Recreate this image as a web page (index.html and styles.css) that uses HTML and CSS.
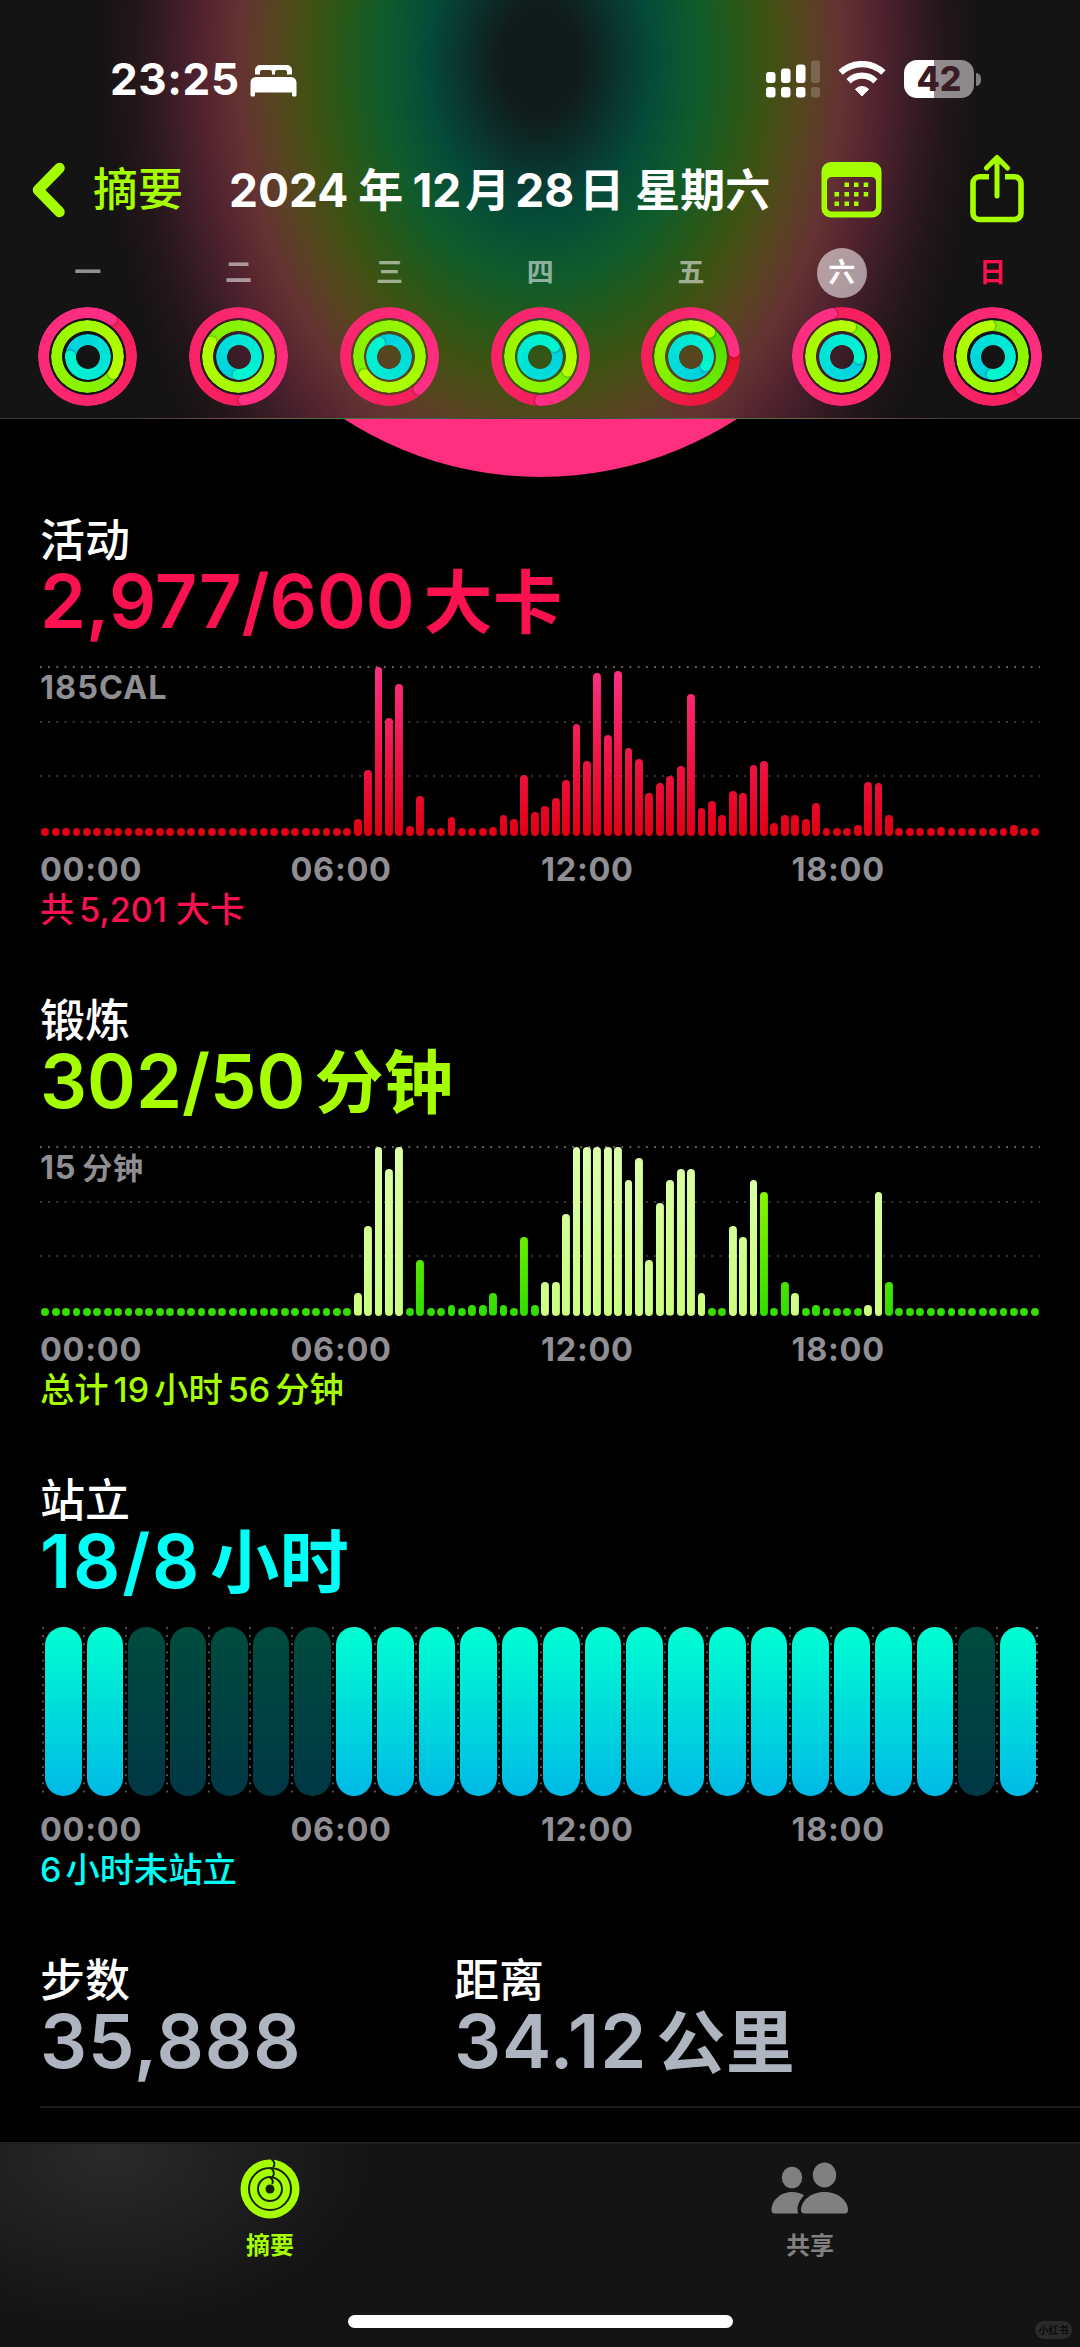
FILE: index.html
```html
<!DOCTYPE html>
<html lang="zh-CN">
<head>
    <meta charset="UTF-8">
    <meta name="viewport" content="width=device-width, initial-scale=1.0">
    <title>健身记录 - 摘要</title>
    <link rel="stylesheet" href="styles.css">
</head>
<body>

<header>
    <div class="status-bar">
        <span class="clock">23:25</span>
        <svg class="bed" width="47" height="33" viewBox="0 0 47 33" fill="#fff">
            <path d="M5 10V6a5 5 0 0 1 5-5h27a5 5 0 0 1 5 5v4.500h-5V8a2 2 0 0 0-2-2h-8a2 2 0 0 0-2 2v2.500h-3V8a2 2 0 0 0-2-2h-8a2 2 0 0 0-2 2v2.500H5z"/>
            <path d="M6 13h35a5.500 5.500 0 0 1 5.500 5.500V31a1.500 1.500 0 0 1-1.500 1.500h-1.500A1.500 1.500 0 0 1 42 31v-2.500H5V31a1.500 1.500 0 0 1-1.500 1.500H2A1.500 1.500 0 0 1 .5 31V18.500A5.500 5.500 0 0 1 6 13z"/>
        </svg>
        <div class="status-icons">
            <svg width="54" height="38" viewBox="0 0 54 38" fill="#fff">
                <rect x="0" y="12" width="9.500" height="11" rx="3"/>
                <rect x="15" y="8.500" width="9.500" height="14.500" rx="3"/>
                <rect x="30" y="4.500" width="9.500" height="18.500" rx="3"/>
                <rect x="0" y="27" width="9.500" height="10.500" rx="3"/>
                <rect x="15" y="27" width="9.500" height="10.500" rx="3"/>
                <rect x="30" y="27" width="9.500" height="10.500" rx="3"/>
                <g opacity=".2">
                    <rect x="45" y=".5" width="9" height="22.500" rx="3"/>
                    <rect x="45" y="27" width="9" height="10.500" rx="3"/>
                </g>
            </svg>
            <svg class="wifi" width="48" height="36" viewBox="0 0 48 36" fill="none" stroke="#fff" stroke-width="6.200">
                <path d="M2.600 11.600a31 31 0 0 1 42.800 0"/>
                <path d="M10.600 20.200a19 19 0 0 1 26.800 0"/>
                <path d="M24 35l-6.600-6.800a9.500 9.500 0 0 1 13.200 0z" fill="#fff" stroke="#fff" stroke-width="1"/>
            </svg>
            <div class="battery"><span>42</span></div>
            <div class="battery-cap"></div>
        </div>
    </div>

    <div class="nav-bar">
        <a class="back" href="#">
            <svg width="34" height="56" viewBox="0 0 34 56" fill="none" stroke="#a6ff00" stroke-width="10.500" stroke-linecap="round" stroke-linejoin="round">
                <path d="M27.500 6L6 28l21.500 22"/>
            </svg>
            <span>摘要</span>
        </a>
        <h1><span>2024</span><span class="zh year">年</span><span>12</span><span class="zh month">月</span><span>28</span><span class="zh date">日</span><span class="zh">星期六</span></h1>
        <svg class="calendar" width="61" height="56" viewBox="0 0 61 56" fill="#a6ff00">
            <path fill-rule="evenodd" d="M10 0h41a9.500 9.500 0 0 1 9.500 9.500v37A9 9 0 0 1 51.500 55.500H9.500A9 9 0 0 1 .5 46.500v-37A9.500 9.500 0 0 1 10 0zM10.500 15A4.500 4.500 0 0 0 6 19.500v25.500A4.500 4.500 0 0 0 10.500 49.500h40A4.500 4.500 0 0 0 55 45V19.500A4.500 4.500 0 0 0 50.500 15z"/>
            <path d="M23.500 20.500h4.500v4.500h-4.500zM33 20.500h4.500v4.500H33zM42.700 20.500h4.500v4.500h-4.500zM13.500 30h4.500v4.500h-4.500zM23.500 30h4.500v4.500h-4.500zM33 30h4.500v4.500H33zM42.700 30h4.500v4.500h-4.500zM13.500 39.500h4.500v4.500h-4.500zM23.500 39.500h4.500v4.500h-4.500zM33 39.500h4.500v4.500H33z"/>
        </svg>
        <svg class="share" width="54" height="69" viewBox="0 0 54 69" fill="none" stroke="#a6ff00" stroke-width="5.600">
            <path d="M19 22.800H9.500a6.500 6.500 0 0 0-6.500 6.500V59A6.500 6.500 0 0 0 9.500 65.500h35a6.500 6.500 0 0 0 6.500-6.500V29.300a6.500 6.500 0 0 0-6.500-6.500H35"/>
            <path d="M27 4v38M16.500 14L27 3.500 37.500 14" stroke-width="5" stroke-linecap="round" stroke-linejoin="round"/>
        </svg>
    </div>

    <div class="week" id="week"></div>
</header>

<main>
    <div class="hero">
        <svg width="1080" height="91" viewBox="0 0 1080 91"><circle cx="540.500" cy="-303.500" r="361.500" fill="#ff2e7e"/></svg>
    </div>

    <section class="move">
        <h2>活动</h2>
        <p class="value">2,977/600<span class="zh">大卡</span></p>
        <div class="chart" id="moveChart"><span class="scale">185CAL</span></div>
        <div class="axis"><span>00:00</span><span>06:00</span><span>12:00</span><span>18:00</span></div>
        <p class="total">共<span class="num">5,201</span>大卡</p>
    </section>

    <section class="exercise">
        <h2>锻炼</h2>
        <p class="value">302/50<span class="zh">分钟</span></p>
        <div class="chart" id="exerciseChart"><span class="scale">15<span class="zh">分钟</span></span></div>
        <div class="axis"><span>00:00</span><span>06:00</span><span>12:00</span><span>18:00</span></div>
        <p class="total">总计<span class="num">19</span>小时<span class="num">56</span>分钟</p>
    </section>

    <section class="stand">
        <h2>站立</h2>
        <p class="value">18/8<span class="zh">小时</span></p>
        <div class="stand-chart" id="standChart"></div>
        <div class="axis"><span>00:00</span><span>06:00</span><span>12:00</span><span>18:00</span></div>
        <p class="total"><span class="num first">6</span>小时未站立</p>
    </section>

    <div class="stats">
        <div class="stat">
            <h2>步数</h2>
            <p class="value">35,888</p>
        </div>
        <div class="stat">
            <h2>距离</h2>
            <p class="value">34.12<span class="zh">公里</span></p>
        </div>
    </div>
</main>

<footer>
    <div class="tabs">
        <a class="tab active" href="#">
            <svg width="60" height="60" viewBox="0 0 60 60">
                <circle cx="30" cy="30" r="29.500" fill="#a6ff00"/>
                <g fill="none" stroke="#16200a" stroke-width="2">
                    <circle cx="30" cy="30" r="21"/>
                    <circle cx="30" cy="30" r="12"/>
                    <path d="M31.500 0c3.500 2.500 3.500 6 1.500 8.500M31 9.500c3.500 2 3.500 6 1.500 8.500M30 18.500c3 1.500 3.500 4.500 2 6.500"/>
                </g>
                <circle cx="30" cy="30" r="4.500" fill="#16200a"/>
            </svg>
            <span>摘要</span>
        </a>
        <a class="tab" href="#">
            <svg width="78" height="60" viewBox="0 0 78 60" fill="#808080">
                <ellipse cx="21" cy="18.500" rx="10.200" ry="10.800"/>
                <ellipse cx="53.500" cy="16" rx="11.700" ry="12.500"/>
                <path d="M3.500 54.500C1.500 54.500.5 53 .5 51 .5 42 9 33 21 33c5 0 9 1.300 12 3.500-4 4-6.500 9-6.500 14.500 0 1.500.3 2.500.8 3.500z"/>
                <path d="M33.500 54.500c-2.500 0-3.500-1.500-3.500-3.500C30 43 38.500 33 53.500 33S77 43 77 51c0 2-1 3.500-3.500 3.500z"/>
            </svg>
            <span>共享</span>
        </a>
    </div>
    <div class="home-indicator"></div>
    <div class="watermark">小红书</div>
</footer>

<script>
    // 每日圆环终点角度：活动、锻炼、站立
    const days = [
        { name: '一', ends: [33, 123, 273] },
        { name: '二', ends: [173, 298, 181] },
        { name: '三', ends: [138, 234, 325] },
        { name: '四', ends: [180, 118, 53] },
        { name: '五', ends: [84, 38, 120], cls: 'low' },
        { name: '六', ends: [347, 17, 95], cls: 'today' },
        { name: '日', ends: [139, 355, 182], cls: 'sunday' }
    ];
    const kinds = ['ring-move', 'ring-exercise', 'ring-stand'];

    document.getElementById('week').innerHTML = days.map(d => `
        <div class="day ${d.cls || ''}">
            <span class="day-name">${d.name}</span>
            <div class="rings">
                ${d.ends.map((end, i) => `<div class="ring ${kinds[i]}" style="--end: ${end}deg"><i></i></div>`).join('')}
            </div>
        </div>`).join('');

    // 每 15 分钟一条，值为高度
    const move = new Array(96).fill(8);
    [17, 66, 169.5, 118.5, 152, 10, 40].forEach((v, i) => move[30 + i] = v);
    move[39] = 19;
    [9.5, 21.5, 17.5, 61, 24.5, 30.5, 38.5, 56, 112.5, 75.5, 163, 101, 165.5, 88.5, 77.5, 43, 53, 60, 70, 142,
     28, 35, 21.5, 45, 43.5, 71, 75.5, 13.5, 21, 21, 17, 33].forEach((v, i) => move[43 + i] = v);
    [11.5, 54.5, 53, 21.5].forEach((v, i) => move[78 + i] = v);
    move[86] = 9;
    move[93] = 11;

    // 锻炼分钟数，w 表示体能训练时段
    const exercise = new Array(96).fill('0');
    '2w 8w 15w 13w 15w 0 5 0 0 1 0 1 1 2 1 0 7 1 3w 3w 9w 15w 15w 15w 15w 15w 12w 14w 5w 10w 12w 13w 13w 2w 0 0 8w 7w 12w 11 0 3 2w 0 1 0 0 0 0 1w 11w 3'
        .split(' ').forEach((v, i) => exercise[30 + i] = v);

    function addBars(id, html) {
        document.getElementById(id).insertAdjacentHTML('beforeend', html);
    }

    addBars('moveChart', move.map(h => `<div class="bar" style="height: ${h}px"></div>`).join(''));
    addBars('exerciseChart', exercise.map(v => {
        const h = Math.max(8, parseInt(v) * 11.3);
        return `<div class="bar ${v.endsWith('w') ? 'workout' : ''}" style="height: ${h}px"></div>`;
    }).join(''));

    // 未站立的小时
    const idle = [2, 3, 4, 5, 6, 22];
    addBars('standChart', Array.from({ length: 24 }, (_, i) =>
        `<div class="hour"><div class="pill ${idle.includes(i) ? 'idle' : ''}"></div></div>`).join(''));
</script>

</body>
</html>
```
FILE: styles.css
```css
* {
    box-sizing: border-box;
}
body {
    font-family: Inter, "Noto Sans CJK SC", sans-serif;
    background-color: #000;
    color: #fff;
    margin: 0;
    width: 1080px;
    height: 2347px;
    overflow: hidden;
    display: flex;
    flex-direction: column;
}
h1, h2, p {
    margin: 0;
    white-space: nowrap;
}
a {
    text-decoration: none;
    color: inherit;
}
svg {
    display: block;
    flex: none;
}

/* 顶部 */
header {
    height: 419px;
    flex: none;
    border-bottom: 1px solid rgba(255, 255, 255, 0.16);
    background: radial-gradient(ellipse 500px 690px at 540px 60px,
        #101a18 0%, #101c1a 8%, #0a3530 16%, #054b39 22.5%, #105c2c 32%,
        #25591a 39%, #3f5212 46%, #574520 53%, #643332 60%, #542430 67%,
        #3a1c27 74%, #231619 81%, #151313 88%, #141414 100%);
}
.status-bar {
    height: 100px;
    padding: 58px 99px 0 110px;
    display: flex;
    align-items: center;
}
.clock {
    font-size: 44px;
    font-weight: 700;
    line-height: 44px;
    width: 128px;
    letter-spacing: 0.6px;
}
.bed {
    margin: 2px 0 0 12px;
}
.status-icons {
    display: flex;
    align-items: center;
    margin-left: auto;
}
.wifi {
    margin-left: 18px;
}
.battery {
    width: 70px;
    height: 38px;
    margin-left: 18px;
    border-radius: 13px;
    background: linear-gradient(to right, #fff 43%, rgba(255, 255, 255, 0.5) 43%);
    color: #3a1c27;
    font-size: 34px;
    font-weight: 800;
    line-height: 38px;
    text-align: center;
}
.battery-cap {
    width: 5px;
    height: 13px;
    margin-left: 2px;
    border-radius: 0 5px 5px 0;
    background-color: rgba(255, 255, 255, 0.45);
}
.nav-bar {
    display: flex;
    align-items: center;
    height: 84px;
    margin-top: 48px;
    padding-left: 32px;
}
.back {
    display: flex;
    align-items: center;
    width: 197px;
    gap: 27px;
    color: #a6ff00;
    font-size: 45px;
    font-weight: 500;
    line-height: 60px;
}
h1 {
    width: 592px;
    font-size: 46px;
    line-height: 60px;
    font-weight: 700;
}
h1 .zh {
    font-size: 45px;
}
h1 .year {
    margin: 0 9px 0 10px;
}
h1 .month {
    margin: 0 5px 0 4px;
}
h1 .date {
    margin: 0 11px 0 5px;
}
.share {
    margin: -3px 0 0 88px;
}
.week {
    display: grid;
    grid-template-columns: repeat(7, 150.8px);
    padding: 16px 0 0 12.4px;
}
.day {
    display: flex;
    flex-direction: column;
    align-items: center;
    --red: #f61f5c;
    --green: #7ff000;
}
.day.low {
    --red: #e8102c;
    --green: #4cdf00;
}
.day-name {
    width: 50px;
    height: 50px;
    border-radius: 50%;
    font-size: 27px;
    font-weight: 700;
    line-height: 49px;
    text-align: center;
    color: rgba(255, 255, 255, 0.55);
}
.today .day-name {
    background-color: rgba(255, 255, 255, 0.55);
    color: #fff;
}
.sunday .day-name {
    color: #fa114f;
}
.rings {
    display: grid;
    place-items: center;
    margin-top: 9px;
}
.ring {
    grid-area: 1 / 1;
    display: grid;
    width: var(--size);
    height: var(--size);
    border-radius: 50%;
    background: conic-gradient(from var(--end), var(--tail), var(--head));
    -webkit-mask: radial-gradient(closest-side, transparent calc(100% - 11.5px), #000 calc(100% - 10.7px));
    mask: radial-gradient(closest-side, transparent calc(100% - 11.5px), #000 calc(100% - 10.7px));
}
.ring i {
    grid-area: 1 / 1;
    width: 11px;
    height: var(--size);
    justify-self: center;
    transform: rotate(var(--end));
}
.ring i::before {
    content: "";
    display: block;
    width: 11px;
    height: 11px;
    border-radius: 50%;
    background-color: var(--head);
    box-shadow: 1px 0 2px rgba(0, 0, 0, 0.3);
}
.ring-move {
    --size: 99px;
    --tail: var(--red);
    --head: #ff2f86;
}
.ring-exercise {
    --size: 73px;
    --tail: var(--green);
    --head: #b6ff00;
}
.ring-stand {
    --size: 46px;
    --tail: #00cfe0;
    --head: #00f7cf;
}

.hero {
    height: 91px;
}

/* 三个统计区块 */
section {
    height: 480px;
    padding: 0 40px;
}
h2 {
    font-size: 45px;
    font-weight: 500;
    line-height: 61px;
    height: 60px;
}
.value {
    height: 62px;
    font-size: 74px;
    font-weight: 600;
    line-height: 62px;
}
.value .zh {
    font-size: 69px;
    line-height: 0;
    margin-left: 9px;
    letter-spacing: 0.5px;
}
.move .value, .move .total {
    color: #fa114f;
}
.exercise .value, .exercise .total {
    color: #a6ff00;
}
.stand .value, .stand .total {
    color: #00fff6;
}
.stand .value {
    letter-spacing: 1.8px;
}
.chart {
    position: relative;
    display: grid;
    grid-template-columns: repeat(96, 1fr);
    align-items: end;
    justify-items: center;
    height: 170px;
    margin-top: 34px;
    background:
        radial-gradient(circle at 1px 1px, #666 0.8px, transparent 1.2px) 0 0 / 8.2px 3px repeat-x,
        radial-gradient(circle at 1px 1px, #3a3a3a 0.8px, transparent 1.2px) 0 55px / 8.2px 3px repeat-x,
        radial-gradient(circle at 1px 1px, #3a3a3a 0.8px, transparent 1.2px) 0 109px / 8.2px 3px repeat-x;
}
.scale {
    position: absolute;
    left: 0;
    top: 2px;
}
.scale, .axis {
    color: #8e8e93;
    font-size: 32.5px;
    font-weight: 700;
    line-height: 40px;
    letter-spacing: 0.7px;
}
.move .scale {
    letter-spacing: 1px;
}
.scale .zh {
    font-size: 30px;
    line-height: 0;
    margin-left: 6px;
}
.bar {
    width: 7.8px;
    border-radius: 4px;
    background: linear-gradient(to top, #e00012, #ff3086) bottom / 100% 170px;
}
.exercise .bar {
    background-image: linear-gradient(to top, #30dc00, #aaff00);
}
.exercise .workout {
    background-image: linear-gradient(to top, #ccff80, #dcffaa);
}
.axis {
    display: grid;
    grid-template-columns: repeat(4, 250.5px);
    margin-top: 13.5px;
}
.total {
    font-size: 34.3px;
    font-weight: 500;
    line-height: 39px;
}
.total .num {
    margin: 0 5px;
    font-size: 34px;
}
.total .first {
    margin: 0 4px 0 0;
}
.move .num {
    margin: 0 9px 0 5px;
}
.stand-chart {
    display: grid;
    grid-template-columns: repeat(24, 41.5px);
    height: 170px;
    margin: 34px 0 0 1.5px;
}
.hour {
    padding-left: 3.5px;
    background: radial-gradient(circle at 1px 2px, #555 0.8px, transparent 1.2px) 0 0 / 2px 8.2px repeat-y;
}
.hour:last-child {
    background:
        radial-gradient(circle at 1px 2px, #555 0.8px, transparent 1.2px) 0 0 / 2px 8.2px repeat-y,
        radial-gradient(circle at 1px 2px, #777 0.8px, transparent 1.2px) 100% 0 / 2px 8.2px repeat-y;
}
.pill {
    width: 36.5px;
    height: 169px;
    margin-top: 1px;
    border-radius: 18.25px;
    background: linear-gradient(to bottom, #00ffd2, #00b9e6);
}
.pill.idle {
    background: linear-gradient(to bottom, #004c3e, #003745);
}

/* 步数与距离 */
.stats {
    display: grid;
    grid-template-columns: 414px 1fr;
    height: 158px;
    margin-left: 40px;
    border-bottom: 2px solid #1c1c1e;
}
.stats .value {
    color: #aeb4c0;
    letter-spacing: 1px;
}

/* 底部标签栏 */
footer {
    position: relative;
    height: 205px;
    margin-top: auto;
    flex: none;
    border-top: 2px solid #202020;
    background: radial-gradient(ellipse 260px 170px at 110px 10px, #2a2a2a, #141414) #141414;
}
.tabs {
    display: grid;
    grid-template-columns: 1fr 1fr;
    padding-top: 15px;
}
.tab {
    display: flex;
    flex-direction: column;
    align-items: center;
    gap: 12px;
    color: #808080;
    font-size: 24px;
    font-weight: 600;
    line-height: 30px;
}
.tab.active {
    color: #a6ff00;
}
.home-indicator {
    width: 385px;
    height: 13px;
    margin: 54px auto 0;
    border-radius: 7px;
    background-color: #fff;
}
.watermark {
    position: absolute;
    right: 8px;
    bottom: 8px;
    width: 37px;
    height: 18px;
    border-radius: 9px;
    background-color: #2b2b2b;
    color: #0c0c0c;
    font-size: 10px;
    font-weight: 700;
    line-height: 18px;
    text-align: center;
}
```
